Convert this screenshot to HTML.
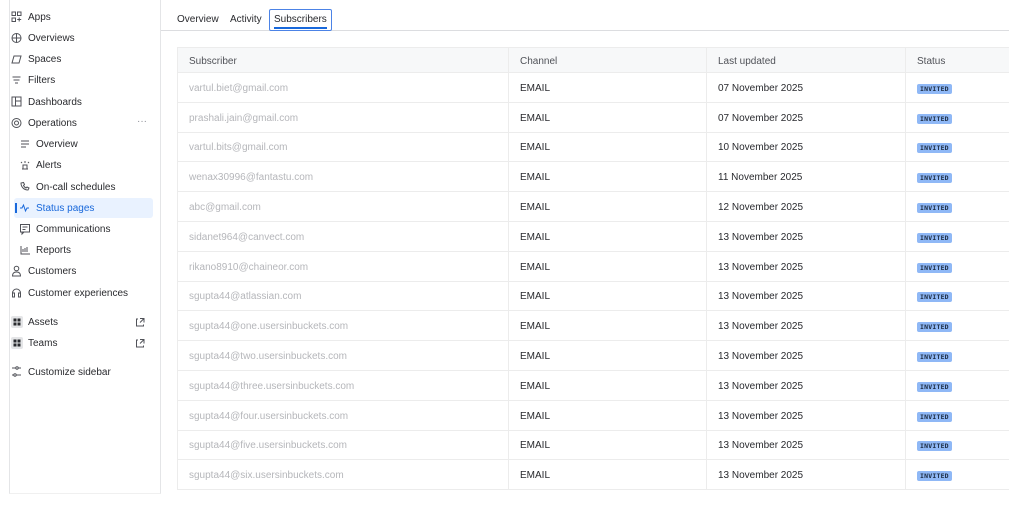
<!DOCTYPE html>
<html><head><meta charset="utf-8"><style>
*{margin:0;padding:0;box-sizing:border-box}
body{width:1024px;height:522px;background:#fff;font-family:"Liberation Sans",sans-serif;color:#292a2e;position:relative;overflow:hidden}
.sb{position:absolute;left:9px;top:0;width:152px;height:494px;border-left:1px solid #e4e5e7;border-right:1px solid #e4e5e7;border-bottom:1px solid #f0f0f0}
.it{position:absolute;font-size:10px;height:14px;line-height:14px;color:#292a2e;white-space:nowrap}
.hl{position:absolute;left:14px;top:198px;width:139px;height:20px;background:#e9f2ff;border-radius:3px}
.tabs{position:absolute;left:161px;top:0;width:848px;height:31px;border-bottom:1px solid #dcdde0}
.tab{position:absolute;top:14px;font-size:10px;color:#292a2e}
.sel{position:absolute;left:269px;top:9px;width:63px;height:22px;border:1.5px solid #4c83e6;border-radius:2px}
.sel:after{content:"";position:absolute;left:4px;right:4px;bottom:1px;height:2px;background:#1868db}
table{position:absolute;left:177px;top:47px;width:832px;border-collapse:collapse;font-size:10px;table-layout:fixed}
td,th{height:29.8px;border-bottom:1px solid #ececec;border-right:1px solid #ececec;padding-left:11px;padding-top:2px;text-align:left;font-weight:normal}
th{height:25px;background:#f7f8f9;color:#505258;border-top:1px solid #ececec}
tr td:first-child,tr th:first-child{border-left:1px solid #ececec;color:#b5b6ba}
tr th:first-child{color:#505258}
td:last-child,th:last-child{border-right:none}
.b{display:inline-block;background:#8fb8f6;color:#1c2b41;font-size:6.5px;font-weight:bold;padding:1px 3px;border-radius:2px;font-family:"DejaVu Sans Mono",monospace;letter-spacing:.2px}
</style></head><body>
<div class="sb"></div>
<div class="hl"></div>
<div style="position:absolute;left:15px;top:203px;width:1.5px;height:10px;background:#1868db"></div>
<svg style="position:absolute;left:0;top:0" width="160" height="400" fill="none" stroke="#505258" stroke-width="1">
<rect x="12" y="12" width="3.5" height="3.5"/><rect x="17.5" y="12" width="3.5" height="3.5"/><rect x="12" y="18" width="3.5" height="3.5"/><path d="M19.2 17.5v4M17.2 19.5h4"/>
<circle cx="16.5" cy="38" r="4.5"/><path d="M12 38h9M16.5 33.5v9"/>
<path d="M12 63l2-7h7l-2 7z"/>
<path d="M12.5 77h8M13.5 80h6M15 83h3"/>
<rect x="12" y="97" width="9" height="9"/><path d="M15.5 97v9M15.5 101h5.5"/>
<circle cx="16.5" cy="123" r="4.5"/><circle cx="16.5" cy="123" r="2"/>
<path d="M21 141h8M21 144h8M21 147h5"/>
<path d="M22 169h6M23 169v-4h4v4M25 163v-2M21 162l1 1M29 162l-1 1"/>
<path d="M21 183c0 4 3 7 7 7l1-2-2-1-1 1c-1-.5-2-1.5-2.5-2.5l1-1-1-2z"/>
<path d="M20 208h2l1.5-3 2 6 1.5-3h2" stroke="#1868db"/>
<rect x="20.5" y="224.5" width="9" height="7.5"/><path d="M22 232v2l2-2M22.5 227h5M22.5 229.5h3"/>
<path d="M21 246v8h9M23 252v-3M25 252v-4M27 252v-5"/>
<circle cx="16.5" cy="268.5" r="2.3"/><path d="M12.5 276c0-3 2-4 4-4s4 1 4 4z"/>
<path d="M12.5 296v-3a4 4 0 0 1 8 0v3M12.5 293h2v4h-2zM18.5 293h2v4h-2z"/>
<path d="M12 368h4M18 368h3M12 375h2M16 375h5"/><circle cx="17" cy="368" r="1.2"/><circle cx="15" cy="375" r="1.2"/>
<path d="M138 319h-1.5v7h7v-1.5M140 318.5h4v4M144 318.5l-4 4"/>
<path d="M138 340h-1.5v7h7v-1.5M140 339.5h4v4M144 339.5l-4 4"/>
</svg>
<div style="position:absolute;left:11px;top:316px;width:12px;height:12px;background:#e4e5e7;border-radius:2px"></div>
<div style="position:absolute;left:11px;top:337px;width:12px;height:12px;background:#e4e5e7;border-radius:2px"></div>
<svg style="position:absolute;left:11px;top:316px" width="12" height="35" fill="#292a2e"><rect x="2.5" y="2.5" width="3" height="3"/><rect x="6.5" y="2.5" width="3" height="3"/><rect x="2.5" y="6.5" width="3" height="3"/><rect x="6.5" y="6.5" width="3" height="3"/><rect x="2.5" y="23.5" width="3" height="3"/><rect x="6.5" y="23.5" width="3" height="3"/><rect x="2.5" y="27.5" width="3" height="3"/><rect x="6.5" y="27.5" width="3" height="3"/></svg>
<div class="it" style="left:28px;top:11px">Apps</div>
<div class="it" style="left:28px;top:32px">Overviews</div>
<div class="it" style="left:28px;top:53px">Spaces</div>
<div class="it" style="left:28px;top:74px">Filters</div>
<div class="it" style="left:28px;top:96px">Dashboards</div>
<div class="it" style="left:28px;top:117px">Operations</div>
<div class="it" style="left:137px;top:115px;color:#8c8f97">···</div>
<div class="it" style="left:36px;top:138px">Overview</div>
<div class="it" style="left:36px;top:159px">Alerts</div>
<div class="it" style="left:36px;top:181px">On-call schedules</div>
<div class="it" style="left:36px;top:202px;color:#1868db">Status pages</div>
<div class="it" style="left:36px;top:223px">Communications</div>
<div class="it" style="left:36px;top:244px">Reports</div>
<div class="it" style="left:28px;top:265px">Customers</div>
<div class="it" style="left:28px;top:287px">Customer experiences</div>
<div class="it" style="left:28px;top:316px">Assets</div>
<div class="it" style="left:28px;top:337px">Teams</div>
<div class="it" style="left:28px;top:366px">Customize sidebar</div>
<div class="tabs"></div>
<div class="tab" style="left:177px">Overview</div>
<div class="tab" style="left:230px">Activity</div>
<div class="sel"></div>
<div class="tab" style="left:274px">Subscribers</div>
<table>
<tr><th style="width:331px">Subscriber</th><th style="width:198px">Channel</th><th style="width:199px">Last updated</th><th>Status</th></tr>
<tr><td>vartul.biet@gmail.com</td><td>EMAIL</td><td>07 November 2025</td><td><span class="b">INVITED</span></td></tr>
<tr><td>prashali.jain@gmail.com</td><td>EMAIL</td><td>07 November 2025</td><td><span class="b">INVITED</span></td></tr>
<tr><td>vartul.bits@gmail.com</td><td>EMAIL</td><td>10 November 2025</td><td><span class="b">INVITED</span></td></tr>
<tr><td>wenax30996@fantastu.com</td><td>EMAIL</td><td>11 November 2025</td><td><span class="b">INVITED</span></td></tr>
<tr><td>abc@gmail.com</td><td>EMAIL</td><td>12 November 2025</td><td><span class="b">INVITED</span></td></tr>
<tr><td>sidanet964@canvect.com</td><td>EMAIL</td><td>13 November 2025</td><td><span class="b">INVITED</span></td></tr>
<tr><td>rikano8910@chaineor.com</td><td>EMAIL</td><td>13 November 2025</td><td><span class="b">INVITED</span></td></tr>
<tr><td>sgupta44@atlassian.com</td><td>EMAIL</td><td>13 November 2025</td><td><span class="b">INVITED</span></td></tr>
<tr><td>sgupta44@one.usersinbuckets.com</td><td>EMAIL</td><td>13 November 2025</td><td><span class="b">INVITED</span></td></tr>
<tr><td>sgupta44@two.usersinbuckets.com</td><td>EMAIL</td><td>13 November 2025</td><td><span class="b">INVITED</span></td></tr>
<tr><td>sgupta44@three.usersinbuckets.com</td><td>EMAIL</td><td>13 November 2025</td><td><span class="b">INVITED</span></td></tr>
<tr><td>sgupta44@four.usersinbuckets.com</td><td>EMAIL</td><td>13 November 2025</td><td><span class="b">INVITED</span></td></tr>
<tr><td>sgupta44@five.usersinbuckets.com</td><td>EMAIL</td><td>13 November 2025</td><td><span class="b">INVITED</span></td></tr>
<tr><td>sgupta44@six.usersinbuckets.com</td><td>EMAIL</td><td>13 November 2025</td><td><span class="b">INVITED</span></td></tr>
</table>
</body></html>
